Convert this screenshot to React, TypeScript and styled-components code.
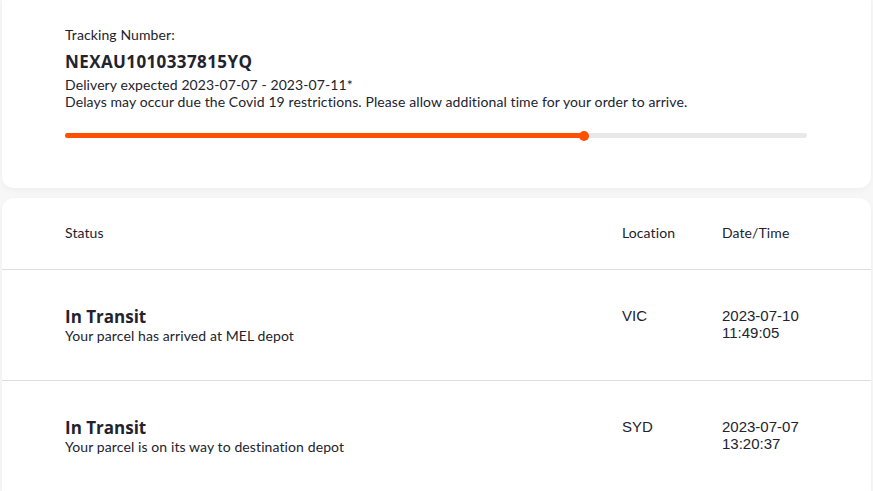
import React from 'react';
import styled, { createGlobalStyle } from 'styled-components';

type TrackingEvent = {
  status: string;
  description: string;
  location: string;
  date: string;
  time: string;
};

const events: TrackingEvent[] = [
  {
    status: 'In Transit',
    description: 'Your parcel has arrived at MEL depot',
    location: 'VIC',
    date: '2023-07-10',
    time: '11:49:05',
  },
  {
    status: 'In Transit',
    description: 'Your parcel is on its way to destination depot',
    location: 'SYD',
    date: '2023-07-07',
    time: '13:20:37',
  },
];

const GlobalStyle = createGlobalStyle`
  body {
    margin: 0;
    background: #f7f7f7;
    font-family: Lato, 'Noto Sans', sans-serif;
    color: #22232e;
  }
`;

const Page = styled.div`
  display: flex;
  flex-direction: column;
  gap: 10px;
  padding: 0 2px;
`;

const Card = styled.section<{ $top?: boolean }>`
  background: #fff;
  border-radius: ${(p) => (p.$top ? '0 0 12px 12px' : '12px 12px 0 0')};
  box-shadow: 0 2px 6px rgba(0, 0, 0, 0.04);
`;

const Summary = styled.div`
  padding: 26px 63px 50px;
`;

const Text = styled.p`
  margin: 0;
  font-size: 14px;
  line-height: 17px;
  letter-spacing: 0.1px;
`;

const TrackingNumber = styled.h2`
  margin: 8px 0 3px;
  font-family: 'Open Sans', sans-serif;
  font-weight: 700;
  font-size: 17px;
  line-height: 22px;
  letter-spacing: 0.4px;
`;

const Track = styled.div`
  position: relative;
  margin-top: 23px;
  width: 742px;
  height: 5px;
  border-radius: 3px;
  background: #e8e8e8;
`;

const Fill = styled.div`
  position: relative;
  height: 100%;
  border-radius: 3px;
  background: #ff5000;

  &::after {
    content: '';
    position: absolute;
    right: -5px;
    top: -2.5px;
    width: 10px;
    height: 10px;
    border-radius: 50%;
    background: #ff5000;
  }
`;

const Row = styled.div<{ $head?: boolean }>`
  display: grid;
  grid-template-columns: 557px 100px 1fr;
  align-items: start;
  padding: ${(p) => (p.$head ? '26px 63px 0' : '37px 63px 0')};
  height: ${(p) => (p.$head ? '72px' : '111px')};
  box-sizing: border-box;
  border-bottom: 1px solid #dedede;
`;

const Title = styled.h3`
  margin: 0;
  font-family: 'Open Sans', sans-serif;
  font-weight: 700;
  font-size: 17px;
  line-height: 20px;
`;

const DataCell = styled.div`
  font-family: 'Liberation Sans', Arial, sans-serif;
  font-size: 15px;
  line-height: 17px;
`;

const App: React.FC = () => {
  const progress = 70;
  return (
    <>
      <GlobalStyle />
      <Page>
        <Card $top>
          <Summary>
            <Text>Tracking Number:</Text>
            <TrackingNumber>NEXAU1010337815YQ</TrackingNumber>
            <Text>Delivery expected 2023-07-07 - 2023-07-11*</Text>
            <Text>
              Delays may occur due the Covid 19 restrictions. Please allow
              additional time for your order to arrive.
            </Text>
            <Track>
              <Fill style={{ width: `${progress}%` }} />
            </Track>
          </Summary>
        </Card>
        <Card>
          <Row $head>
            <Text>Status</Text>
            <Text>Location</Text>
            <Text>Date/Time</Text>
          </Row>
          {events.map((ev, idx) => (
            <Row key={idx}>
              <div>
                <Title>{ev.status}</Title>
                <Text>{ev.description}</Text>
              </div>
              <DataCell>{ev.location}</DataCell>
              <DataCell>
                {ev.date}
                <br />
                {ev.time}
              </DataCell>
            </Row>
          ))}
        </Card>
      </Page>
    </>
  );
};

export default App;
